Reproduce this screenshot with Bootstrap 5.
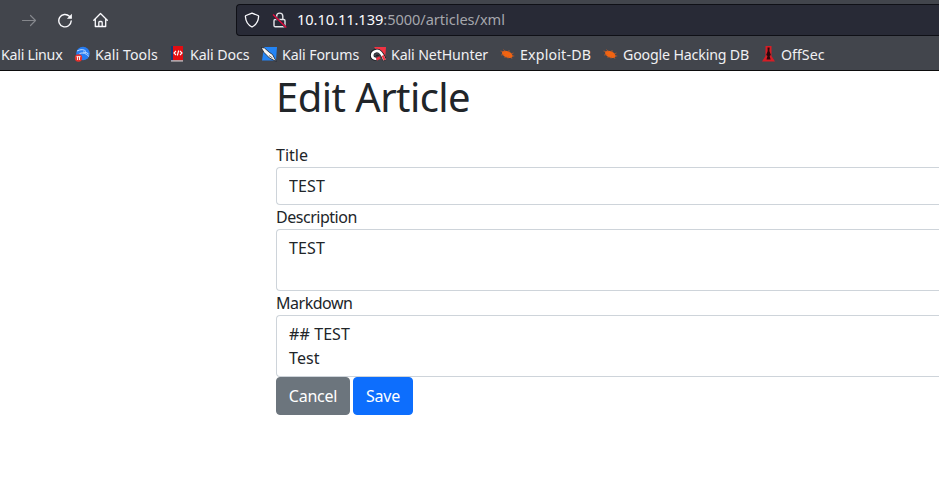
<!DOCTYPE html>
<html lang="en">
<head>
<meta charset="utf-8">
<title>Edit Article</title>
<link href="https://cdn.jsdelivr.net/npm/bootstrap@5.3.0/dist/css/bootstrap.min.css" rel="stylesheet">
<style>
body{font-family:"Noto Sans",sans-serif;height:481px;color:#212529;background:#fff}
.chrome{background:#42454c;height:71px;border-bottom:1px solid #0c0c0d;color:#fbfbfe}
.toolbar-row{height:39px;padding-left:21px}
.tool{width:16px;height:16px;margin-right:20px;flex:none}
.urlbar{height:32px;margin-left:107px;background:#282a36;border:1px solid #0f1016;border-right:0;border-radius:4px 0 0 4px;font-size:14.6px;padding-left:7px;color:#a5a6ac;letter-spacing:-.05px}
.urlbar b{font-weight:400;color:#fbfbfe}
.address{margin-left:9px}
.bookmarks{height:31px;font-size:14.2px;white-space:nowrap;padding-left:1px;color:#f0f0f3}
.bm{flex:none;display:flex;align-items:center}
.bm svg{width:16px;height:16px;margin-right:5px;margin-left:-1px;flex:none}
.w1{width:74px;letter-spacing:-.25px}.w2{width:95px;letter-spacing:.05px}.w3{width:92px;letter-spacing:-.1px}.w4{width:109px;letter-spacing:-.12px}.w5{width:129px;letter-spacing:-.12px}.w6{width:103px;letter-spacing:.18px}.w7{width:158px;letter-spacing:-.16px}
.page{margin-left:276px;padding-top:2px}
.page h1{font-size:40px;font-weight:400;line-height:48px;letter-spacing:-.57px;margin-bottom:22px}
.page label{display:block;line-height:24px;letter-spacing:-.48px}
.page label[for=t]{letter-spacing:0}
.page .form-control{border-color:#ced4da;border-right:0;border-radius:4px 0 0 4px;color:#212529;resize:none;overflow:hidden;letter-spacing:.1px}
.page textarea.form-control{height:62px;display:block}
.page .btn{border-radius:4px;letter-spacing:-.25px}
.btn-cancel{width:74px;padding-left:0;padding-right:0;margin-right:3px}
.btn-save{width:60px;padding-left:0;padding-right:0}
</style>
<script src="https://cdn.jsdelivr.net/npm/bootstrap@5.3.0/dist/js/bootstrap.bundle.min.js"></script>
</head>
<body class="overflow-hidden">
<svg width="0" height="0" class="d-none">
<symbol id="bug" viewBox="0 0 16 16"><ellipse cx="8.300" cy="8.400" rx="5.600" ry="3.200" transform="rotate(24 8.300 8.400)" fill="#f26411"/><path d="M1.500 5l4 1M2 9l3.500-.5M4.500 3.500l2 2.500M10 4l0 2.500M5.500 12l2-2M9 12.500l.5-2M13 12.800l-1.500-2M12 8l2.500-1M13 10l2.300 0" fill="none" stroke="#c95c25" stroke-width=".7"/></symbol>
</svg>
<header class="chrome">
<div class="toolbar-row d-flex align-items-center">
<svg class="tool" viewBox="0 0 16 16" fill="none" stroke="#85878c" stroke-width="1.200" stroke-linecap="round" stroke-linejoin="round"><path d="M1.500 8.500h13M9.500 3.500l5 5-5 5"/></svg>
<svg class="tool" viewBox="0 0 16 16" fill="none" stroke="#fbfbfe" stroke-width="1.400" stroke-linecap="round"><path d="M12.400 4.300A6.200 6.200 0 1 0 14.200 9"/><path d="M14.900 1.700v5h-5z" fill="#fbfbfe" stroke="none"/></svg>
<svg class="tool" viewBox="0 0 16 16" fill="none" stroke="#fbfbfe" stroke-width="1.300" stroke-linecap="round" stroke-linejoin="round"><path d="M.8 8.300L7.500 1.500l6.800 6.800M2.300 7v7.500h10.400V7M5.800 14.500v-4q0-1 1-1h1.400q1 0 1 1v4"/></svg>
<div class="urlbar d-flex align-items-center flex-grow-1">
<svg width="16" height="16" viewBox="0 0 16 16" fill="none" stroke="#fbfbfe" stroke-width="1.300" stroke-linejoin="round"><path d="M8 1.100L14 3.500q.7.300.6 1C14.300 9.500 12 13 8 15 4 13 1.700 9.500 1.400 4.500q-.1-.7.600-1z"/></svg>
<svg class="ms-2" width="20" height="16" viewBox="0 0 20 16" fill="none"><path d="M7.300 7.500h8.400q1.300 0 1.300 1.300v4.700q0 1.300-1.300 1.300H7.300q-1.300 0-1.300-1.300V8.800q0-1.300 1.300-1.300zM8.600 7V4.200a3.100 3.100 0 0 1 6.200 0V7.500" stroke="#e4e4e8" stroke-width="1.400"/><path d="M5.800 3.500L17 14.500" stroke="#282a36" stroke-width="2.400"/><path d="M5 2.500L18.300 15.500" stroke="#e8093e" stroke-width="1.300"/></svg>
<span class="address"><b>10.10.11.139</b>:5000/articles/xml</span>
</div>
</div>
<nav class="bookmarks d-flex align-items-center">
<div class="bm w1"><span>Kali Linux</span></div>
<div class="bm w2"><svg viewBox="0 0 16 16"><circle cx="9" cy="7.500" r="6.800" fill="#267cf2"/><path d="M3 5q6-3 9 .5M5.500 7.500q5-2 9.500 3M9 6q4 0 5.500 2" stroke="#d5e8ff" fill="none" stroke-width=".9"/><circle cx="4.500" cy="12" r="3.700" fill="#e5322d"/><path d="M2.500 10.700h4M3.500 10.700v3.300M5.500 10.700v3.300" stroke="#fff" stroke-width=".9"/></svg><span>Kali Tools</span></div>
<div class="bm w3"><svg viewBox="0 0 16 16"><path d="M2 0h2v15H2z" fill="#173873"/><path d="M4 0h10v14.300H4z" fill="#e20d12"/><path d="M2 14.300h12V15.500H2z" fill="#d9cfd0"/><path d="M7 5L5 7l2 2M11 5l2 2-2 2M9.700 4.500L8.300 9.500" stroke="#fff" fill="none" stroke-width="1.100"/></svg><span>Kali Docs</span></div>
<div class="bm w4"><svg viewBox="0 0 16 16"><path d="M3 1h13l-1 13.500H1z" fill="#2384f5"/><path d="M0 1.500l3.500.5 5 4.500 3 2L15.300 15.500 8.500 12 6 9.500 3 6.500z" fill="#f5f5f5" stroke="#1c2028" stroke-width=".8"/><path d="M8 9.500l3.500 2.500" stroke="#30343a" stroke-width=".7"/></svg><span>Kali Forums</span></div>
<div class="bm w5"><svg viewBox="0 0 16 16"><path d="M4 1h12l-1 13z" fill="#f23343"/><path d="M6.500 13C0 13 .5 5.500 6.500 4.800Q11 4 15 14.500" fill="none" stroke="#202126" stroke-width="4.200"/><path d="M6.500 13C.5 13 1 6 6.500 5Q11 4.500 14.500 14" fill="none" stroke="#fff" stroke-width="2.700"/><path d="M5.500 10.500q0-2 2-2 1.500 0 2 1.500z" fill="#202126"/><path d="M6.500 13.300l3.500-1.800" stroke="#f23343" stroke-width="2.600"/><path d="M12.700 9.500l2 4.500" stroke="#f23343" stroke-width="2.200"/></svg><span>Kali NetHunter</span></div>
<div class="bm w6"><svg viewBox="0 0 16 16"><use href="#bug"/></svg><span>Exploit-DB</span></div>
<div class="bm w7"><svg viewBox="0 0 16 16"><use href="#bug"/></svg><span>Google Hacking DB</span></div>
<div class="bm"><svg viewBox="0 0 16 16"><path d="M5.500 0h6v10l3.500 5.500H2l3.500-5.500z" fill="#d71d25"/><path d="M7.500 1.500h2.200l-.3 3.500 1.500 4-1.300 1 1 3.500H6.500l1-3.500-1.300-1 1.500-4z" fill="#29090c"/></svg><span>OffSec</span></div>
</nav>
</header>
<main class="page">
<h1>Edit Article</h1>
<form>
<label for="t">Title</label>
<input id="t" class="form-control" value="TEST">
<label for="d">Description</label>
<textarea id="d" class="form-control">TEST</textarea>
<label for="m">Markdown</label>
<textarea id="m" class="form-control">## TEST
Test</textarea>
<div class="d-flex"><a class="btn btn-secondary btn-cancel">Cancel</a><button type="button" class="btn btn-primary btn-save">Save</button></div>
</form>
</main>
</body>
</html>
